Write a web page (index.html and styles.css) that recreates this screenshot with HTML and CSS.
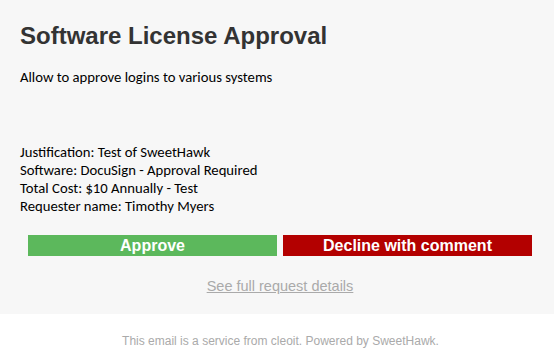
FILE: index.html
```html
<!DOCTYPE html>
<html lang="en">
<head>
    <meta charset="UTF-8">
    <title>Software License Approval</title>
    <link rel="stylesheet" href="styles.css">
</head>
<body>
    <div class="panel">
        <h1>Software License Approval</h1>
        <p class="intro">Allow to approve logins to various systems</p>
        <div class="details">
            <div>Justification: Test of SweetHawk</div>
            <div>Software: DocuSign - Approval Required</div>
            <div>Total Cost: $10 Annually - Test</div>
            <div>Requester name: Timothy Myers</div>
        </div>
        <div class="actions">
            <a class="btn approve" href="#">Approve</a>
            <a class="btn decline" href="#">Decline with comment</a>
        </div>
        <div class="more">
            <a href="#">See full request details</a>
        </div>
    </div>
    <p class="footer">This email is a service from cleoit. Powered by SweetHawk.</p>
</body>
</html>
```

FILE: styles.css
```css
body {
    margin: 0;
    background-color: #fff;
    font-family: "Liberation Sans", Arial, sans-serif;
}
.panel {
    background-color: #f7f7f7;
    margin-right: 1px;
    padding: 22px 20px 0 20px;
    height: 292px;
}
h1 {
    margin: 0;
    font-size: 24px;
    line-height: 28px;
    color: #333;
}
.intro, .details {
    font-family: Carlito, Lato, sans-serif;
    font-size: 14.7px;
    line-height: 18px;
    color: #000;
}
.intro {
    margin: 18px 0 0 0;
}
.details {
    margin-top: 57px;
}
.actions {
    display: flex;
    gap: 6px;
    margin: 20px 2px 0 8px;
}
.btn {
    flex: 1;
    height: 21px;
    line-height: 21px;
    text-align: center;
    color: #fff;
    font-weight: bold;
    font-size: 16px;
    text-decoration: none;
}
.approve {
    background-color: #5cb85c;
}
.decline {
    background-color: #b30000;
}
.more {
    text-align: center;
    margin-top: 21px;
    padding-left: 6px;
}
.more a {
    color: #aaa;
    font-size: 14.5px;
}
.footer {
    margin: 20px 0 0 0;
    padding-left: 6px;
    text-align: center;
    color: #aaa;
    font-size: 12px;
}
```
